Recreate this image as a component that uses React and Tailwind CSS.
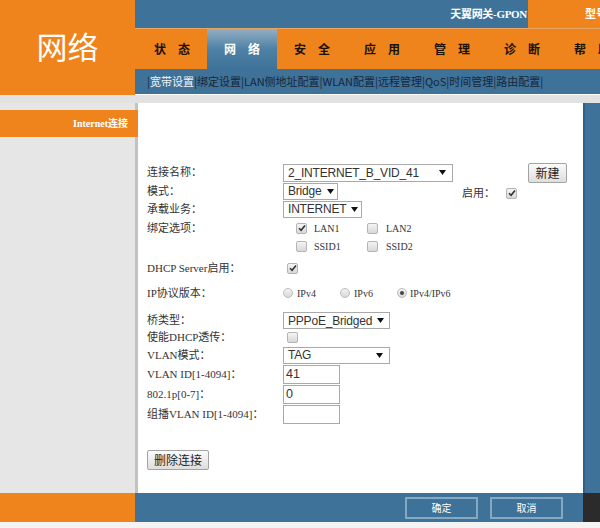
import React from "react";

const Check = () => (
  <svg width="8" height="8" viewBox="0 0 8 8" className="absolute left-[1px] top-[0px]">
    <path d="M1 4.2 L3.1 6.3 L7 1.5" fill="none" stroke="#333" strokeWidth="1.6" />
  </svg>
);

function Checkbox({ checked }) {
  return (
    <div className="relative w-[11px] h-[11px] rounded-[2px] border border-[#b4b4b4] bg-gradient-to-b from-[#f4f4f4] to-[#d8d8d8] shrink-0">
      {checked && <Check />}
    </div>
  );
}

function Radio({ checked }) {
  return (
    <div className="w-[10px] h-[10px] rounded-full border border-[#bdbdbd] bg-gradient-to-b from-[#f2f2f2] to-[#d9d9d9] flex items-center justify-center shrink-0">
      {checked && <div className="w-[4px] h-[4px] rounded-full bg-[#444]" />}
    </div>
  );
}

function Select({ value, w }) {
  return (
    <div
      className={`h-full border border-[#a9a9a9] bg-white flex items-center justify-between gap-[5px] pl-[4px] pr-[6px] text-[12px] tracking-[-0.2px] text-[#333] font-['Liberation_Sans',sans-serif] whitespace-nowrap ${w}`}
    >
      <span className="leading-none">{value}</span>
      <svg width="7" height="5" viewBox="0 0 7 5" className="shrink-0">
        <path d="M0 0 L7 0 L3.5 5 Z" fill="#111" />
      </svg>
    </div>
  );
}

function Input({ value }) {
  return (
    <div className="w-[57px] h-full border border-[#a9a9a9] bg-white flex items-center pl-[2px] text-[12.5px] text-[#333] font-['Liberation_Sans',sans-serif]">
      {value}
    </div>
  );
}

const labelCls = "w-[136px] shrink-0 text-[11px] text-[#333]";

export default function App() {
  const tabs = ["状态", "网络", "安全", "应用", "管理", "诊断", "帮助"];
  const sub = ["宽带设置", "绑定设置", "LAN侧地址配置", "WLAN配置", "远程管理", "QoS", "时间管理", "路由配置"];
  return (
    <div className="w-[600px] h-[528px] overflow-hidden bg-white font-['Liberation_Serif','Noto_Sans_CJK_SC',serif]">
      {/* header */}
      <div className="flex h-[95px]">
        <div className="w-[135px] shrink-0 bg-[#f0841c] flex items-center justify-center pb-[2px] text-white text-[31px] font-['Noto_Sans_CJK_SC',sans-serif]">
          网络
        </div>
        <div className="flex-1 flex flex-col min-w-0">
          <div className="h-[29px] bg-[#3e7298] flex items-center justify-end border-b border-[#e9a463]">
            <span className="text-white font-bold text-[11px] mr-[1px] tracking-[-0.3px]">天翼网关-GPON</span>
            <div className="w-[72px] h-full bg-[#f0841c] flex items-center pl-[57px] text-white font-bold text-[11px] overflow-hidden whitespace-nowrap">
              型号：
            </div>
          </div>
          <div className="h-[40px] bg-[#f0841c] flex pl-[2px] overflow-hidden">
            {tabs.map((t, i) => (
              <div
                key={t}
                className={`w-[70px] shrink-0 h-full flex items-center justify-center gap-[12px] text-[12px] font-bold font-['Noto_Sans_CJK_SC',sans-serif] ${
                  i === 1
                    ? "bg-gradient-to-b from-[#93afc3] via-[#4e81a5] to-[#3e7298] text-white"
                    : "text-[#1a1208]"
                }`}
              >
                <span>{t[0]}</span>
                <span>{t[1]}</span>
              </div>
            ))}
          </div>
          <div className="h-[25px] bg-[#3e7298] flex items-center pl-[12px] text-[11px] whitespace-nowrap overflow-hidden font-['Noto_Sans_CJK_SC',sans-serif]">
            {sub.map((s, i) => (
              <span key={s} className="text-[#16263a]">
                |<span className={i === 0 ? "text-[#eef3f7]" : "text-[#16263a]"}>{s}</span>{" "}
              </span>
            ))}
            <span className="text-[#16263a]">|</span>
          </div>
        </div>
      </div>
      <div className="h-[8px] bg-[#e2e2e2]" />
      {/* main */}
      <div className="flex h-[390px]">
        <div className="w-[135px] shrink-0 bg-[#e6e6e6] pt-[7px]">
          <div className="relative z-10 w-[138px] h-[27px] bg-[#f0841c] flex items-center justify-end pr-[10px] text-white font-bold text-[10px]">
            Internet连接
          </div>
        </div>
        <div className="w-[3px] shrink-0 bg-[#c2c2c2]" />
        <div className="w-[445px] shrink-0 bg-white pl-[9px] pr-[16px] pt-[60px] flex flex-col">
          {/* row 1 */}
          <div className="flex items-center h-[19px]">
            <div className={labelCls}>连接名称：</div>
            <div className="h-[18px]">
              <Select value="2_INTERNET_B_VID_41" w="w-[170px]" />
            </div>
            <button className="ml-auto w-[39px] h-[20px] border border-[#a3a3a3] rounded-[2px] bg-gradient-to-b from-[#fbfbfb] to-[#dedede] text-[12px] text-[#222] font-['Noto_Sans_CJK_SC',sans-serif] flex items-center justify-center">
              新建
            </button>
          </div>
          {/* row 2 */}
          <div className="flex items-center h-[18px]">
            <div className={labelCls}>模式：</div>
            <div className="h-[17px]">
              <Select value="Bridge" w="w-[55px]" />
            </div>
            <div className="ml-auto mr-[50px] flex items-center mt-[4px]">
              <span className="text-[11px] text-[#333] mr-[11px]">启用：</span>
              <Checkbox checked />
            </div>
          </div>
          {/* row 3 */}
          <div className="flex items-center h-[18px]">
            <div className={labelCls}>承载业务：</div>
            <div className="h-[17px]">
              <Select value="INTERNET" w="w-[79px]" />
            </div>
          </div>
          {/* row 4 */}
          <div className="flex items-center h-[17px] mt-[2px]">
            <div className={labelCls}>绑定选项：</div>
            <div className="w-[84px] flex items-center pl-[13px]">
              <Checkbox checked />
              <span className="ml-[7px] text-[10px] text-[#333]">LAN1</span>
            </div>
            <div className="flex items-center">
              <Checkbox />
              <span className="ml-[8px] text-[10px] text-[#333]">LAN2</span>
            </div>
          </div>
          {/* row 5 */}
          <div className="flex items-center h-[17px] mt-[1px]">
            <div className={labelCls}></div>
            <div className="w-[84px] flex items-center pl-[13px]">
              <Checkbox />
              <span className="ml-[7px] text-[10px] text-[#333]">SSID1</span>
            </div>
            <div className="flex items-center">
              <Checkbox />
              <span className="ml-[8px] text-[10px] text-[#333]">SSID2</span>
            </div>
          </div>
          {/* row 6 */}
          <div className="flex items-center h-[16px] mt-[5px]">
            <div className={labelCls}>DHCP Server启用：</div>
            <div className="pl-[4px]">
              <Checkbox checked />
            </div>
          </div>
          {/* row 7 */}
          <div className="flex items-center h-[16px] mt-[9px]">
            <div className={labelCls}>IP协议版本：</div>
            <div className="w-[57px] flex items-center">
              <Radio />
              <span className="ml-[4px] text-[10px] text-[#333]">IPv4</span>
            </div>
            <div className="w-[57px] flex items-center">
              <Radio />
              <span className="ml-[4px] text-[10px] text-[#333]">IPv6</span>
            </div>
            <div className="flex items-center">
              <Radio checked />
              <span className="ml-[3px] text-[10px] text-[#333]">IPv4/IPv6</span>
            </div>
          </div>
          {/* row 8 */}
          <div className="flex items-center h-[17px] mt-[11px]">
            <div className={labelCls}>桥类型：</div>
            <div className="h-[17px]">
              <Select value="PPPoE_Bridged" w="w-[107px]" />
            </div>
          </div>
          {/* row 9 */}
          <div className="flex items-center h-[17px]">
            <div className={labelCls}>使能DHCP透传：</div>
            <div className="pl-[4px]">
              <Checkbox />
            </div>
          </div>
          {/* row 10 */}
          <div className="flex items-center h-[18px]">
            <div className={labelCls}>VLAN模式：</div>
            <div className="h-[17px]">
              <Select value="TAG" w="w-[107px]" />
            </div>
          </div>
          {/* row 11 */}
          <div className="flex items-center h-[19px] mt-[1px]">
            <div className={labelCls}>VLAN ID[1-4094]：</div>
            <Input value="41" />
          </div>
          <div className="flex items-center h-[19px] mt-[1px]">
            <div className={labelCls}>802.1p[0-7]：</div>
            <Input value="0" />
          </div>
          <div className="flex items-center h-[19px] mt-[1px]">
            <div className={labelCls}>组播VLAN ID[1-4094]：</div>
            <Input value="" />
          </div>
          <div className="mt-[26px]">
            <button className="w-[62px] h-[20px] border border-[#a3a3a3] rounded-[2px] bg-gradient-to-b from-[#fbfbfb] to-[#dedede] text-[12px] text-[#222] font-['Noto_Sans_CJK_SC',sans-serif] flex items-center justify-center">
              删除连接
            </button>
          </div>
        </div>
        <div className="flex-1 bg-[#3e7298] border-l-2 border-[#2f6188]" />
      </div>
      {/* bottom bar */}
      <div className="flex h-[29px]">
        <div className="w-[135px] shrink-0 bg-[#f0841c]" />
        <div className="w-[448px] shrink-0 bg-[#3e7298] flex items-center pl-[270px] gap-[12px]">
          <div className="w-[73px] h-[22px] border-2 border-[#86a9c2] flex items-center justify-center text-white text-[10px] font-['Noto_Sans_CJK_SC',sans-serif]">
            确定
          </div>
          <div className="w-[73px] h-[22px] border-2 border-[#86a9c2] flex items-center justify-center text-white text-[10px] font-['Noto_Sans_CJK_SC',sans-serif]">
            取消
          </div>
        </div>
        <div className="flex-1 bg-[#2b2b2b]" />
      </div>
      <div className="h-[6px] bg-[#f4f4f4]" />
    </div>
  );
}
